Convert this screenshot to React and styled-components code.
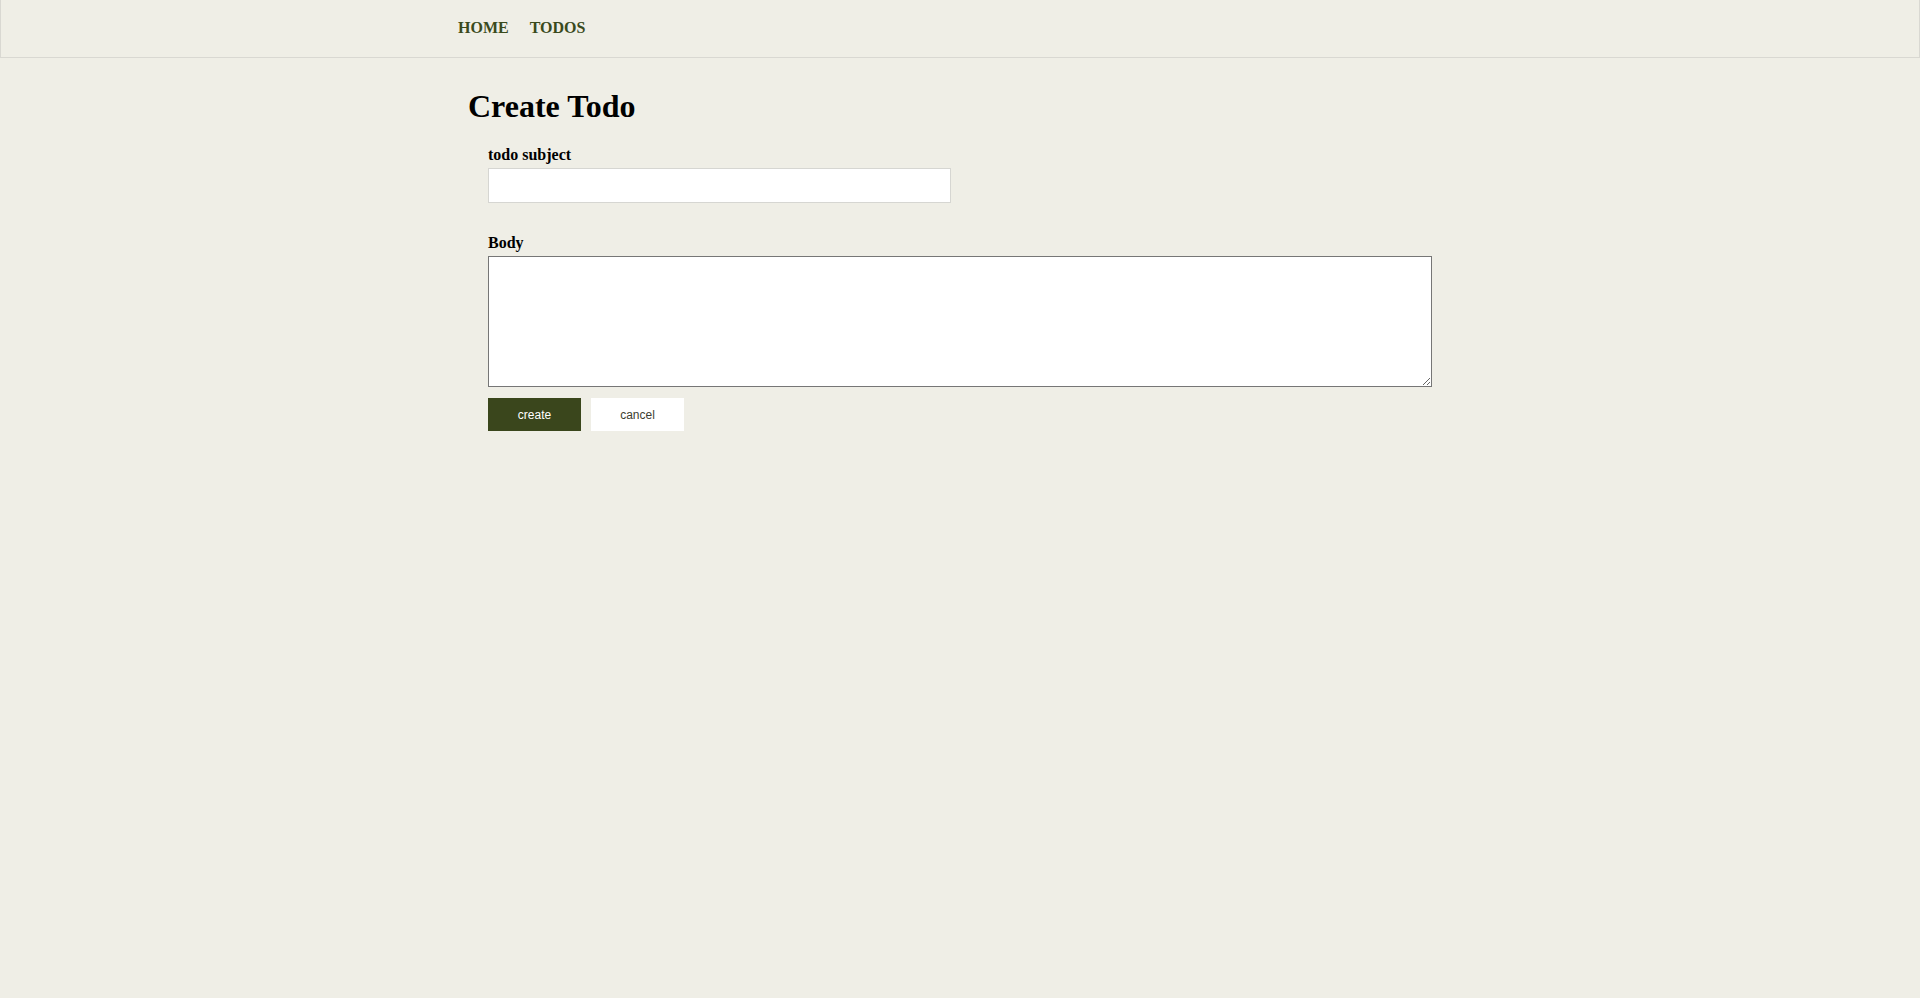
import React from "react";
import styled, { createGlobalStyle } from "styled-components";

const GlobalStyle = createGlobalStyle`
  html, body {
    margin: 0;
    padding: 0;
    background-color: #efeee6;
    font-family: "Liberation Serif", "Times New Roman", serif;
    color: #000;
  }
  #root {
    min-height: 998px;
    background-color: #efeee6;
  }
`;

const Nav = styled.nav`
  height: 57px;
  border: 1px solid #d9d8d2;
  border-top: none;
  background-color: #efeee6;
`;

const NavInner = styled.div`
  width: 1004px;
  margin: 0 auto;
  height: 100%;
  display: flex;
  align-items: center;
  gap: 21px;
`;

const NavLink = styled.a`
  color: #3a4a1c;
  font-weight: bold;
  font-size: 16px;
  text-decoration: none;
  cursor: pointer;
  padding-bottom: 2px;
`;

const Main = styled.main`
  width: 1000px;
  margin: 0 auto;
  padding: 9px 8px 0;
  box-sizing: border-box;
`;

const Title = styled.h1`
  font-size: 32px;
  margin: 21px 0 21px;
`;

const Form = styled.form`
  padding-left: 20px;
  display: flex;
  flex-direction: column;
  align-items: flex-start;
`;

const Field = styled.div`
  display: flex;
  flex-direction: column;
  margin-bottom: ${(props) => props.gap || "0px"};
`;

const Label = styled.label`
  font-weight: bold;
  font-size: 16px;
  margin-bottom: 4px;
`;

const TextInput = styled.input`
  width: 463px;
  height: 35px;
  box-sizing: border-box;
  border: 1px solid #d6d6d2;
  background: #fff;
  outline: none;
`;

const TextArea = styled.textarea`
  width: 944px;
  height: 131px;
  box-sizing: border-box;
  border: 1px solid #767676;
  background: #fff;
  outline: none;
  margin: 0;
  resize: both;
`;

const Actions = styled.div`
  display: flex;
  gap: 10px;
  margin-top: 11px;
`;

const Button = styled.button`
  width: 93px;
  height: 33px;
  border: none;
  font-family: "Liberation Sans", Arial, sans-serif;
  font-size: 12px;
  cursor: pointer;
  background-color: ${(props) => (props.primary ? "#3a461c" : "#fff")};
  color: ${(props) => (props.primary ? "#fff" : "#3d4030")};
`;

const App = () => {
  return (
    <>
      <GlobalStyle />
      <Nav>
        <NavInner>
          <NavLink>HOME</NavLink>
          <NavLink>TODOS</NavLink>
        </NavInner>
      </Nav>
      <Main>
        <Title>Create Todo</Title>
        <Form onSubmit={(e) => e.preventDefault()}>
          <Field gap="31px">
            <Label>todo subject</Label>
            <TextInput type="text" />
          </Field>
          <Field>
            <Label>Body</Label>
            <TextArea />
          </Field>
          <Actions>
            <Button primary type="submit">create</Button>
            <Button type="button">cancel</Button>
          </Actions>
        </Form>
      </Main>
    </>
  );
};

export default App;
